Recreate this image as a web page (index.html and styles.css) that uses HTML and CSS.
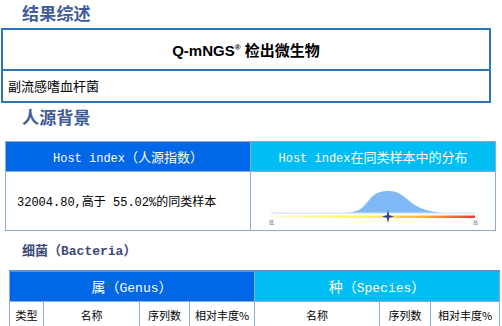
FILE: index.html
```html
<!DOCTYPE html>
<html lang="zh">
<head>
<meta charset="utf-8">
<link rel="stylesheet" href="styles.css">
</head>
<body>
<div class="page">
  <h2 class="title t1">结果综述</h2>
  <table class="summary">
    <tr><th>Q-mNGS<sup>®</sup> 检出微生物</th></tr>
    <tr><td>副流感嗜血杆菌</td></tr>
  </table>

  <h2 class="title t2">人源背景</h2>
  <table class="host">
    <tr>
      <th class="h-blue"><span class="lat">Host index</span>（人源指数）</th>
      <th class="h-cyan"><span class="lat">Host index</span>在同类样本中的分布</th>
    </tr>
    <tr>
      <td class="val">32004.80,高于 55.02%的同类样本</td>
      <td class="chart">
        <svg width="244" height="56" viewBox="0 0 244 56">
          <defs>
            <linearGradient id="heat" x1="0" x2="1" y1="0" y2="0">
              <stop offset="0" stop-color="#fffbe6"/>
              <stop offset="0.5" stop-color="#fff24a"/>
              <stop offset="0.75" stop-color="#f9b040"/>
              <stop offset="1" stop-color="#e8383c"/>
            </linearGradient>
          </defs>
          <path d="M20,41 L88,41 C98,41 106,40 111,36 C116,31 119,26 123,23 C127,20 131,19 138,19 C146,19 150,22 156,27 C164,34 172,39 192,41 L224,41 Z" fill="#80b9f6"/>
          <rect x="20" y="40.5" width="204" height="1.5" fill="#dbeaf6"/>
          <rect x="20" y="43.5" width="204" height="2.5" fill="url(#heat)"/>
          <polygon points="137,38 138.3,43.2 143,44.5 138.3,45.8 137,51 135.7,45.8 131,44.5 135.7,43.2" fill="#2b4a86"/>
          <text x="18" y="52" class="tiny">低</text>
          <text x="222" y="52" class="tiny">高</text>
        </svg>
      </td>
    </tr>
  </table>

  <h3 class="sub">细菌（Bacteria）</h3>
  <table class="bact">
    <colgroup>
      <col style="width:34px"><col style="width:96px"><col style="width:50px"><col style="width:65px">
      <col style="width:125px"><col style="width:51px"><col style="width:69px">
    </colgroup>
    <tr>
      <th colspan="4" class="h-blue">属（<span class="lat">Genus</span>）</th>
      <th colspan="3" class="h-cyan">种（<span class="lat">Species</span>）</th>
    </tr>
    <tr class="cols">
      <td>类型</td><td>名称</td><td>序列数</td><td>相对丰度%</td>
      <td>名称</td><td>序列数</td><td>相对丰度%</td>
    </tr>
  </table>
</div>
</body>
</html>
```

FILE: styles.css
```css
* { box-sizing: border-box; }
html, body { margin: 0; padding: 0; background: #fff; }
body {
  width: 502px;
  height: 326px;
  overflow: hidden;
  font-family: "Noto Sans CJK SC", sans-serif;
  color: #000;
}
.page { display: flex; flex-direction: column; align-items: flex-start; }

.title {
  margin: 0;
  padding-left: 22px;
  font-size: 17px;
  font-weight: bold;
  color: #3e5c9c;
  line-height: 25px;
  letter-spacing: 0.2px;
}
.t1 { height: 28px; }
.t2 { height: 38px; padding-top: 1px; }

table { border-collapse: collapse; table-layout: fixed; }

.summary {
  width: 490px;
  margin-left: 1px;
}
.summary th, .summary td {
  border: 2px solid #2e75b6;
}
.summary th {
  height: 41px;
  font-size: 15px;
  font-weight: bold;
  font-family: "Liberation Sans", "Noto Sans CJK SC", sans-serif;
  text-align: center;
  padding: 0;
}
.summary th sup { font-size: 8px; vertical-align: 6px; }
.summary td {
  height: 30px;
  font-size: 13px;
  padding: 0 0 0 5px;
  line-height: 30px;
}

.host {
  width: 490px;
  margin-left: 5px;
}
.host th, .host td { border: 1px solid #8eaadb; padding: 0; }
.host th {
  height: 30px;
  width: 245px;
  font-family: "Noto Sans CJK SC", sans-serif;
  font-weight: normal;
  font-size: 13px;
  color: #fff;
  text-align: center;
}
.lat { font-family: "Liberation Mono", monospace; font-size: 12px; }
.h-blue { background: #0068e6; }
.h-cyan { background: #00bdf4; }
.host td { height: 59px; }
.val {
  font-family: "Liberation Mono", "Noto Sans CJK SC", monospace;
  font-size: 12px;
  padding-left: 11px !important;
  vertical-align: middle;
}
.chart { vertical-align: top; }
.chart svg { display: block; }
.tiny { font-size: 5px; fill: #666; font-family: "Noto Sans CJK SC", sans-serif; }

.sub {
  margin: 0;
  padding-left: 22px;
  height: 39px;
  padding-top: 13px;
  font-size: 13px;
  line-height: 16px;
  font-weight: bold;
  color: #3c4a78;
  font-family: "Liberation Mono", "Noto Sans CJK SC", monospace;
}

.bact {
  width: 490px;
  margin-left: 9px;
}
.bact th, .bact td { border: 1px solid #8eaadb; padding: 0; }
.bact th {
  height: 30px;
  font-family: "Noto Sans CJK SC", sans-serif;
  font-weight: normal;
  font-size: 14px;
  color: #fff;
  text-align: center;
  border-top: 2px solid #5a8fd9;
}
.bact th .lat { font-size: 13px; }
.cols td {
  height: 28px;
  font-size: 11px;
  text-align: center;
  white-space: nowrap;
  overflow: hidden;
}
```
